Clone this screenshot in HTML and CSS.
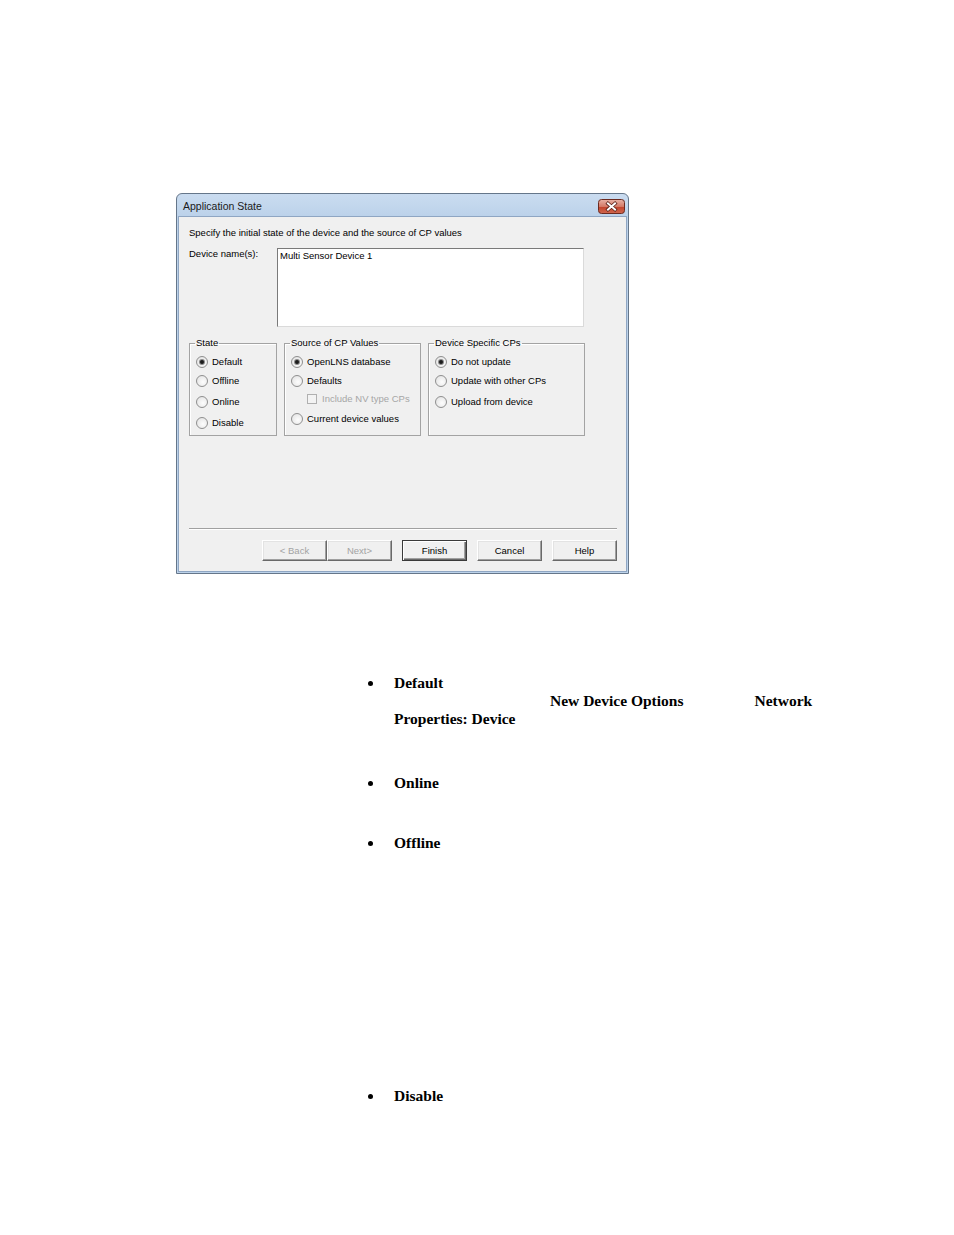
FILE: index.html
```html
<!DOCTYPE html>
<html>
<head>
<meta charset="utf-8">
<title>Application State</title>
<link rel="stylesheet" href="styles.css">
</head>
<body>
<div class="page">
  <div class="dialog">
    <div class="titlebar">
      <span class="title">Application State</span>
      <span class="close">
        <svg width="27" height="15" viewBox="0 0 27 15">
          <defs>
            <linearGradient id="cg" x1="0" y1="0" x2="0" y2="1">
              <stop offset="0" stop-color="#e8b2a6"/>
              <stop offset="0.5" stop-color="#d47a67"/>
              <stop offset="0.55" stop-color="#c2442d"/>
              <stop offset="1" stop-color="#d0674f"/>
            </linearGradient>
          </defs>
          <rect x="0.5" y="0.5" width="26" height="14" rx="3" fill="url(#cg)" stroke="#6b2a20"/>
          <path d="M10 4.5 L17 10.5 M17 4.5 L10 10.5" stroke="#5a2018" stroke-width="3.6" stroke-linecap="square"/>
          <path d="M10 4.5 L17 10.5 M17 4.5 L10 10.5" stroke="#ffffff" stroke-width="2" stroke-linecap="square"/>
        </svg>
      </span>
    </div>
    <div class="client">
      <div class="intro">Specify the initial state of the device and the source of CP values</div>
      <div class="name-row">
        <div class="name-label">Device name(s):</div>
        <div class="textbox">Multi Sensor Device 1</div>
      </div>
      <div class="groups">
        <fieldset class="group g-state">
          <legend>State</legend>
          <div class="opt"><span class="radio on"></span>Default</div>
          <div class="opt m7"><span class="radio"></span>Offline</div>
          <div class="opt m9"><span class="radio"></span>Online</div>
          <div class="opt m9"><span class="radio"></span>Disable</div>
        </fieldset>
        <fieldset class="group g-source">
          <legend>Source of CP Values</legend>
          <div class="opt"><span class="radio on"></span>OpenLNS database</div>
          <div class="opt m7"><span class="radio"></span>Defaults</div>
          <div class="opt m6 sub disabled"><span class="check"></span>Include NV type CPs</div>
          <div class="opt m8"><span class="radio"></span>Current device values</div>
        </fieldset>
        <fieldset class="group g-device">
          <legend>Device Specific CPs</legend>
          <div class="opt"><span class="radio on"></span>Do not update</div>
          <div class="opt m7"><span class="radio"></span>Update with other CPs</div>
          <div class="opt m9"><span class="radio"></span>Upload from device</div>
        </fieldset>
      </div>
      <div class="separator"></div>
      <div class="buttons">
        <div class="pair">
          <button class="btn" disabled>&lt; Back</button>
          <button class="btn" disabled>Next&gt;</button>
        </div>
        <button class="btn default">Finish</button>
        <button class="btn">Cancel</button>
        <button class="btn">Help</button>
      </div>
    </div>
  </div>

  <div class="notes">
    <div class="item">
      <span class="bullet"></span>
      <div class="text">
        <div class="line">Default</div>
        <div class="line"><span class="w1">New Device Options</span><span class="w2">Network</span></div>
        <div class="line">Properties: Device</div>
      </div>
    </div>
    <div class="item i-online">
      <span class="bullet"></span>
      <div class="text"><div class="line">Online</div></div>
    </div>
    <div class="item i-offline">
      <span class="bullet"></span>
      <div class="text"><div class="line">Offline</div></div>
    </div>
    <div class="item i-disable">
      <span class="bullet"></span>
      <div class="text"><div class="line">Disable</div></div>
    </div>
  </div>
</div>
</body>
</html>
```
FILE: styles.css
```css
* { box-sizing: border-box; }
body { margin: 0; background: #fff; }
.page {
  width: 954px;
  height: 1235px;
  overflow: hidden;
  padding-top: 193px;
}
.dialog {
  margin-left: 176px;
  width: 453px;
  height: 381px;
  border: 1px solid #65768a;
  border-radius: 6px 6px 0 0;
  background: linear-gradient(#cadcf0, #bcd2ea 22px, #bcd2ea);
  display: flex;
  flex-direction: column;
  padding: 0 1px 1px;
  font-family: "Liberation Sans", Arial, sans-serif;
  font-size: 9.5px;
  color: #000;
}
.titlebar {
  height: 22px;
  flex: none;
  display: flex;
  align-items: center;
  justify-content: space-between;
  padding: 1px 2px 0 5px;
}
.title { font-size: 10.5px; color: #1b1b1b; }
.close { width: 27px; height: 15px; display: block; margin-top: 2px; }
.close svg { display: block; }
.client {
  flex: 1;
  background: #f0f0f0;
  border: 1px solid #8fa6c3;
  display: flex;
  flex-direction: column;
  padding: 0 9px 9px 10px;
}
.intro { margin-top: 10px; line-height: 12px; }
.name-row { display: flex; margin-top: 9px; }
.name-label { width: 88px; line-height: 12px; }
.textbox {
  width: 307px;
  height: 79px;
  background: #fff;
  border: 1px solid;
  border-color: #7a7a7a #dadada #dadada #7a7a7a;
  padding: 1px 2px;
  line-height: 12px;
}
.groups { display: flex; gap: 7px; margin-top: 10px; }
.group {
  margin: 0;
  height: 99px;
  border: 1px solid #a3a3a3;
  box-shadow: inset 1px 1px #fff;
  padding: 7px 0 0 6px;
}
.g-state { width: 88px; }
.g-source { width: 137px; }
.g-device { width: 157px; }
.group legend {
  padding: 0 1px;
  margin-left: -1px;
  line-height: 12px;
}
.opt {
  display: flex;
  align-items: center;
  gap: 4px;
  height: 12px;
  line-height: 12px;
  white-space: nowrap;
}
.m6 { margin-top: 6px; }
.m7 { margin-top: 7px; }
.m8 { margin-top: 8px; }
.m9 { margin-top: 9px; }
.radio {
  width: 12px;
  height: 12px;
  flex: none;
  border-radius: 50%;
  border: 1px solid #8f8f8f;
  background: radial-gradient(circle at 60% 60%, #fdfdfd 0, #e8e8e8 70%, #d2d2d2 100%);
  display: flex;
  align-items: center;
  justify-content: center;
}
.radio.on::after {
  content: "";
  width: 4px;
  height: 4px;
  border-radius: 50%;
  background: #1c1c1c;
  box-shadow: 0 0 0 1px #8a8a8a;
}
.sub { padding-left: 16px; gap: 5px; }
.check {
  width: 10px;
  height: 10px;
  flex: none;
  border: 1px solid #b0b0b0;
  background: #f3f3f3;
}
.disabled { color: #a6a6a6; }
.separator {
  margin-top: auto;
  height: 2px;
  border-top: 1px solid #a0a0a0;
  border-bottom: 1px solid #fff;
}
.buttons {
  display: flex;
  justify-content: flex-end;
  gap: 10px;
  margin-top: 10px;
  margin-bottom: 1px;
}
.pair { display: flex; }
.btn {
  width: 65px;
  height: 21px;
  padding: 0;
  margin: 0;
  font: inherit;
  color: #000;
  background: #f0f0f0;
  border: 1px solid;
  border-color: #fff #696969 #696969 #fff;
  box-shadow: inset -1px -1px #a0a0a0, inset 1px 1px #e3e3e3;
}
.btn:disabled { color: #a3a3a3; }
.btn.default {
  border-color: #3a3a3a;
  box-shadow: inset 1px 1px #fff, inset -1px -1px #696969, inset -2px -2px #a0a0a0;
}
.notes {
  margin-top: 100px;
  margin-left: 367px;
  font-family: "Liberation Serif", "Times New Roman", serif;
  font-weight: bold;
  font-size: 15.5px;
  line-height: 18px;
  color: #000;
}
.item { display: flex; }
.bullet {
  width: 27px;
  height: 18px;
  flex: none;
  display: flex;
  align-items: center;
  padding-left: 1px;
}
.bullet::before {
  content: "";
  width: 5px;
  height: 5px;
  border-radius: 50%;
  background: #000;
  margin-top: 1px;
}
.w1 { margin-left: 156px; }
.w2 { margin-left: 71px; }
.i-online { margin-top: 46px; }
.i-offline { margin-top: 42px; }
.i-disable { margin-top: 235px; }
```
